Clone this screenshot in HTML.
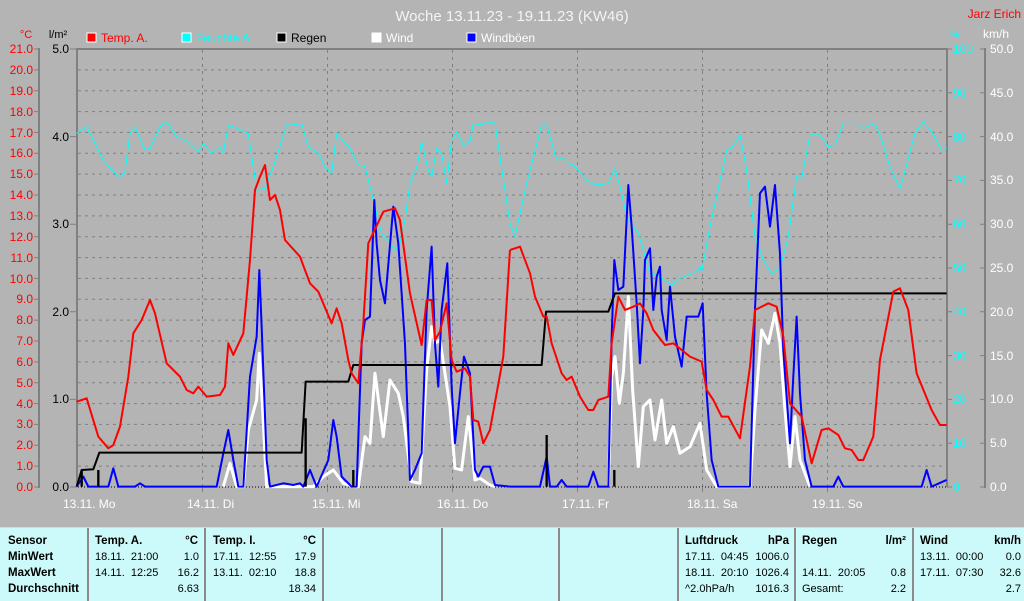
<!DOCTYPE html>
<html><head><meta charset="utf-8"><style>
body{margin:0;width:1024px;height:600px;overflow:hidden;background:#b4b4b4;font-family:"Liberation Sans",sans-serif}
svg{position:absolute;left:0;top:0}
#tb{position:absolute;left:0;top:527px;width:1024px;height:73px;background:#ccfafa;border-top:1px solid #d8d8d8;font-size:11px;color:#000}
#tb div{position:absolute;white-space:nowrap}
.b{font-weight:bold;font-size:11.5px}
.vl{top:0;width:2px;height:73px;background:#8a8a8a}
.r{text-align:right}
</style></head><body>
<svg width="1024" height="527" font-family="Liberation Sans, sans-serif">
<text x="512" y="21" text-anchor="middle" fill="#f4f4f4" font-size="15">Woche 13.11.23 - 19.11.23 (KW46)</text>
<text x="1021" y="18" text-anchor="end" fill="#f00" font-size="12">Jarz Erich</text>
<text x="26" y="38" text-anchor="middle" fill="#f00" font-size="11">°C</text>
<text x="58" y="38" text-anchor="middle" fill="#000" font-size="11">l/m²</text>
<text x="955" y="38" text-anchor="middle" fill="#0ff" font-size="11">%</text>
<text x="996" y="38" text-anchor="middle" fill="#fff" font-size="12">km/h</text>
<g font-size="12">
<rect x="87" y="33" width="9" height="9" fill="#f00" stroke="#fff"/><text x="101" y="42" fill="#f00">Temp. A.</text>
<rect x="182" y="33" width="9" height="9" fill="#0ff" stroke="#fff"/><text x="196" y="42" fill="#0ff">Feuchte A.</text>
<rect x="277" y="33" width="9" height="9" fill="#000" stroke="#fff"/><text x="291" y="42" fill="#000">Regen</text>
<rect x="372" y="33" width="9" height="9" fill="#fff" stroke="#fff"/><text x="386" y="42" fill="#fff">Wind</text>
<rect x="467" y="33" width="9" height="9" fill="#00f" stroke="#fff"/><text x="481" y="42" fill="#fff">Windböen</text>
</g>
<g stroke="#808080" stroke-dasharray="3,4" stroke-width="1">
<path d="M78 69.9H946M78 90.7H946M78 111.6H946M78 132.4H946M78 153.3H946M78 174.1H946M78 195H946M78 215.9H946M78 236.7H946M78 257.6H946M78 278.4H946M78 299.3H946M78 320.1H946M78 341H946M78 361.9H946M78 382.7H946M78 403.6H946M78 424.4H946M78 445.3H946M78 466.1H946"/>
<path d="M202.5 50V487M327.5 50V487M452.5 50V487M577.5 50V487M702.5 50V487M827.5 50V487"/>
</g>
<g stroke="#808080" stroke-width="2" fill="none">
<path d="M77 487V49H947V487"/>
<path d="M39 48V488M985 48V488"/>
</g>
<path d="M78 487H946" stroke="#000" stroke-dasharray="1,2"/>
<g stroke="#808080" stroke-width="1">
<path d="M34 49H39M34 69.9H39M34 90.7H39M34 111.6H39M34 132.4H39M34 153.3H39M34 174.1H39M34 195H39M34 215.9H39M34 236.7H39M34 257.6H39M34 278.4H39M34 299.3H39M34 320.1H39M34 341H39M34 361.9H39M34 382.7H39M34 403.6H39M34 424.4H39M34 445.3H39M34 466.1H39M34 487H39"/>
<path d="M70 49H77M70 136.6H77M70 224.2H77M70 311.8H77M70 399.4H77M70 487H77"/>
<path d="M947 49H952M947 92.8H952M947 136.6H952M947 180.4H952M947 224.2H952M947 268H952M947 311.8H952M947 355.6H952M947 399.4H952M947 443.2H952M947 487H952"/>
<path d="M980 49H985M980 92.8H985M980 136.6H985M980 180.4H985M980 224.2H985M980 268H985M980 311.8H985M980 355.6H985M980 399.4H985M980 443.2H985M980 487H985"/>
<path d="M202.5 487V492M327.5 487V492M452.5 487V492M577.5 487V492M702.5 487V492M827.5 487V492"/>
</g>
<g fill="#f00" font-size="12" text-anchor="end">
<text x="33" y="53">21.0</text><text x="33" y="74">20.0</text><text x="33" y="95">19.0</text><text x="33" y="116">18.0</text><text x="33" y="137">17.0</text><text x="33" y="157">16.0</text><text x="33" y="178">15.0</text><text x="33" y="199">14.0</text><text x="33" y="220">13.0</text><text x="33" y="241">12.0</text><text x="33" y="262">11.0</text><text x="33" y="283">10.0</text><text x="33" y="303">9.0</text><text x="33" y="324">8.0</text><text x="33" y="345">7.0</text><text x="33" y="366">6.0</text><text x="33" y="387">5.0</text><text x="33" y="408">4.0</text><text x="33" y="428">3.0</text><text x="33" y="449">2.0</text><text x="33" y="470">1.0</text><text x="33" y="491">0.0</text>
</g>
<g fill="#000" font-size="12" text-anchor="end">
<text x="69" y="53">5.0</text><text x="69" y="141">4.0</text><text x="69" y="228">3.0</text><text x="69" y="316">2.0</text><text x="69" y="403">1.0</text><text x="69" y="491">0.0</text>
</g>
<g fill="#0ff" font-size="12">
<text x="953" y="53">100</text><text x="953" y="97">90</text><text x="953" y="141">80</text><text x="953" y="184">70</text><text x="953" y="228">60</text><text x="953" y="272">50</text><text x="953" y="316">40</text><text x="953" y="360">30</text><text x="953" y="403">20</text><text x="953" y="447">10</text><text x="953" y="491">0</text>
</g>
<g fill="#fff" font-size="12">
<text x="990" y="53">50.0</text><text x="990" y="97">45.0</text><text x="990" y="141">40.0</text><text x="990" y="184">35.0</text><text x="990" y="228">30.0</text><text x="990" y="272">25.0</text><text x="990" y="316">20.0</text><text x="990" y="360">15.0</text><text x="990" y="403">10.0</text><text x="990" y="447">5.0</text><text x="990" y="491">0.0</text>
</g>
<g fill="#fff" font-size="12">
<text x="63" y="508">13.11.  Mo</text><text x="187" y="508">14.11.  Di</text><text x="312" y="508">15.11.  Mi</text><text x="437" y="508">16.11.  Do</text><text x="562" y="508">17.11.  Fr</text><text x="687" y="508">18.11.  Sa</text><text x="812" y="508">19.11.  So</text>
</g>
<g transform="translate(70,110) scale(0.3333)" fill="none" stroke-linejoin="round">
<polyline stroke="#0ff" stroke-width="3" points="20,70 50,50 70,90 100,150 130,185 150,200 165,185 180,70 195,50 225,120 240,115 270,50 290,35 320,80 355,95 385,125 400,100 425,130 450,110 460,130 475,45 500,55 535,70 560,240 585,235 610,170 650,45 670,45 695,40 715,110 745,130 765,170 785,190 800,70 840,115 865,165 885,170 915,290 935,370 960,400 975,420 990,400 1005,330 1020,220 1040,175 1055,95 1075,180 1085,200 1100,115 1115,130 1130,220 1145,90 1160,65 1180,105 1200,95 1210,40 1235,45 1250,35 1275,40 1320,340"/>
<polyline stroke="#fff" stroke-width="9" points="460,1130 480,1060 500,1130 520,1130 535,960 560,870 568,730 578,900 590,1130 730,1130 760,1100 790,1080 820,1120 850,1130 865,1130 885,980 900,1000 915,790 940,980 960,810 985,850 1000,920 1025,1115 1050,1120 1070,780 1085,650 1095,700 1110,690 1140,890 1155,1075 1175,1080 1195,920 1215,1110 1230,1105 1260,1125 1275,1130"/>
<polyline stroke="#00f" stroke-width="6" points="20,1130 40,1100 55,1130 115,1130 130,1075 145,1130 195,1130 210,1120 225,1130 440,1130 460,1030 475,960 490,1050 505,1130 520,1130 540,800 560,680 568,480 575,650 590,1050 600,1130 640,1120 670,1125 690,1120 700,1130 720,1080 740,1130 775,1050 790,930 800,980 815,1100 845,1130 860,1130 875,700 885,630 900,620 913,270 920,400 930,510 945,580 970,290 985,400 1005,700 1020,1110 1035,1080 1055,1030 1070,600 1085,410 1095,700 1105,830 1115,600 1132,460 1145,830 1155,1000 1170,850 1182,740 1200,790 1215,1080 1225,1100 1240,1070 1260,1070 1275,1125 1320,1130"/>
<polyline stroke="#000" stroke-width="6" points="20,1130 35,1080 70,1078 88,1028 695,1028 707,815 835,815 850,765 1320,765"/>
<path stroke="#000" stroke-width="7" d="M85 1080V1130M707 925V1130M850 1080V1130M35 1080V1130"/>
<polyline stroke="#f00" stroke-width="6" points="20,875 50,865 85,980 115,1015 130,1005 150,950 175,800 190,670 215,630 240,570 255,610 290,760 330,800 350,840 370,850 385,830 410,860 450,855 465,830 475,700 490,735 520,670 540,450 555,240 570,200 585,165 600,270 615,255 630,300 645,390 690,440 720,520 745,545 785,640 800,595 815,640 835,750 845,790 865,820 880,640 895,400 940,305 975,295 990,330 1020,550 1055,705 1070,570 1085,570 1095,690 1110,665 1130,580 1145,750 1160,785 1185,775 1200,800 1210,930 1225,935 1240,1000 1260,960 1300,740 1320,420"/>
</g>
<g transform="translate(510,110) scale(0.3333)" fill="none" stroke-linejoin="round">
<polyline stroke="#0ff" stroke-width="3" points="0,340 15,380 50,220 95,45 110,45 140,150 160,145 175,160 190,165 230,210 260,225 295,220 315,175 330,230 350,320 385,370 400,420 420,490 450,500 485,525 510,505 550,490 570,470 575,485 600,350 650,120 665,115 690,75 710,180 735,380 760,450 785,490 810,475 835,380 860,200 875,205 900,75 930,75 955,110 975,105 1000,40 1045,40 1060,55 1095,40 1115,90 1140,170 1170,235 1190,165 1215,70 1240,35 1265,65 1295,120 1310,115"/>
<polyline stroke="#fff" stroke-width="9" points="295,1130 305,800 315,740 328,880 340,790 355,560 368,840 385,1070 400,890 420,870 435,990 455,870 470,1000 490,950 510,1030 540,1010 570,940 590,1080 620,1130 720,1130 735,900 755,660 775,700 795,610 810,700 825,900 840,1070 855,920 870,1050 900,1130"/>
<polyline stroke="#00f" stroke-width="6" points="0,1130 90,1130 110,1040 120,1130 140,1130 155,1110 170,1130 235,1130 250,1085 265,1130 295,1130 305,680 313,450 325,540 340,530 355,225 365,350 380,580 390,760 400,600 405,450 420,415 430,600 440,500 450,470 455,600 470,690 480,530 495,680 515,770 530,620 540,620 565,620 578,580 590,850 605,1050 625,1130 720,1130 735,600 750,250 765,230 780,350 795,225 810,430 820,720 840,1000 850,800 860,620 870,850 885,1050 905,1130 970,1130 985,1100 1000,1130 1235,1130 1250,1080 1265,1130 1310,1110"/>
<polyline stroke="#000" stroke-width="6" points="0,765 95,765 108,605 295,605 315,550 1310,550"/>
<path stroke="#000" stroke-width="7" d="M110 975V1130M313 1080V1130"/>
<polyline stroke="#f00" stroke-width="6" points="0,420 30,410 60,490 75,560 100,620 110,620 125,700 155,790 170,810 185,800 210,860 235,900 250,900 265,870 295,860 305,700 325,560 345,600 370,590 390,580 410,610 430,660 465,705 490,700 540,740 575,755 590,840 610,870 635,920 655,920 690,985 720,770 735,600 775,580 800,590 820,680 840,880 875,920 905,1060 935,960 955,955 985,975 1005,1015 1025,1020 1045,1050 1060,1050 1090,980 1110,750 1150,545 1170,535 1195,600 1220,790 1265,900 1290,945 1310,945"/>
</g>
</svg>
<div id="tb">
<div class="vl" style="left:87px"></div><div class="vl" style="left:204px"></div><div class="vl" style="left:322px"></div><div class="vl" style="left:441px"></div><div class="vl" style="left:558px"></div><div class="vl" style="left:677px"></div><div class="vl" style="left:794px"></div><div class="vl" style="left:912px"></div>
<div class="b" style="left:8px;top:7px">Sensor</div><div class="b" style="left:8px;top:23px">MinWert</div><div class="b" style="left:8px;top:39px">MaxWert</div><div class="b" style="left:8px;top:55px">Durchschnitt</div>
<div class="b" style="left:95px;top:7px">Temp. A.</div><div class="b r" style="right:826px;top:7px">°C</div>
<div style="left:95px;top:23px">18.11.&nbsp; 21:00</div><div class="r" style="right:825px;top:23px">1.0</div>
<div style="left:95px;top:39px">14.11.&nbsp; 12:25</div><div class="r" style="right:825px;top:39px">16.2</div>
<div class="r" style="right:825px;top:55px">6.63</div>
<div class="b" style="left:213px;top:7px">Temp. I.</div><div class="b r" style="right:708px;top:7px">°C</div>
<div style="left:213px;top:23px">17.11.&nbsp; 12:55</div><div class="r" style="right:708px;top:23px">17.9</div>
<div style="left:213px;top:39px">13.11.&nbsp; 02:10</div><div class="r" style="right:708px;top:39px">18.8</div>
<div class="r" style="right:708px;top:55px">18.34</div>
<div class="b" style="left:685px;top:7px">Luftdruck</div><div class="b r" style="right:235px;top:7px">hPa</div>
<div style="left:685px;top:23px">17.11.&nbsp; 04:45</div><div class="r" style="right:235px;top:23px">1006.0</div>
<div style="left:685px;top:39px">18.11.&nbsp; 20:10</div><div class="r" style="right:235px;top:39px">1026.4</div>
<div style="left:685px;top:55px">^2.0hPa/h</div><div class="r" style="right:235px;top:55px">1016.3</div>
<div class="b" style="left:802px;top:7px">Regen</div><div class="b r" style="right:118px;top:7px">l/m²</div>
<div style="left:802px;top:39px">14.11.&nbsp; 20:05</div><div class="r" style="right:118px;top:39px">0.8</div>
<div style="left:802px;top:55px">Gesamt:</div><div class="r" style="right:118px;top:55px">2.2</div>
<div class="b" style="left:920px;top:7px">Wind</div><div class="b r" style="right:3px;top:7px">km/h</div>
<div style="left:920px;top:23px">13.11.&nbsp; 00:00</div><div class="r" style="right:3px;top:23px">0.0</div>
<div style="left:920px;top:39px">17.11.&nbsp; 07:30</div><div class="r" style="right:3px;top:39px">32.6</div>
<div class="r" style="right:3px;top:55px">2.7</div>
</div>
</body></html>
